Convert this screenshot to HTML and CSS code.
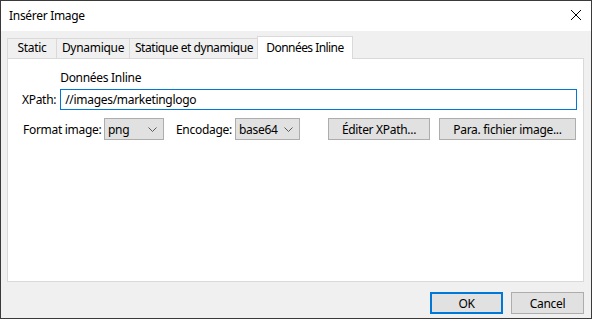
FILE: index.html
```html
<!DOCTYPE html>
<html lang="fr">
<head>
    <meta charset="UTF-8">
    <meta name="viewport" content="width=device-width, initial-scale=1.0">
    <title>Insérer Image</title>
    <link rel="stylesheet" href="styles.css">
</head>
<body>
    <div class="dialog">
        <div class="titlebar">
            <span class="title">Insérer Image</span>
            <svg class="close" width="12" height="12" viewBox="0 0 12 12">
                <path d="M1 1 L11 11 M11 1 L1 11" stroke="#000" stroke-width="1" fill="none"/>
            </svg>
        </div>
        <div class="content">
            <div class="tabs">
                <div class="tab tab-static">Static</div>
                <div class="tab tab-dyn">Dynamique</div>
                <div class="tab tab-both">Statique et dynamique</div>
                <div class="tab tab-inline active">Données Inline</div>
            </div>
            <div class="panel">
                <div class="field-grid">
                    <span></span>
                    <span class="heading">Données Inline</span>
                    <label for="xpath">XPath:</label>
                    <input type="text" id="xpath" value="//images/marketinglogo">
                </div>
                <div class="options">
                    <span class="opt-label">Format image:</span>
                    <div class="combo combo-format">
                        <span>png</span>
                        <svg width="9" height="5" viewBox="0 0 9 5"><path d="M0.5 0.5 L4.5 4.5 L8.5 0.5" stroke="#5a5a5a" fill="none"/></svg>
                    </div>
                    <span class="opt-label encodage">Encodage:</span>
                    <div class="combo combo-enc">
                        <span>base64</span>
                        <svg width="9" height="5" viewBox="0 0 9 5"><path d="M0.5 0.5 L4.5 4.5 L8.5 0.5" stroke="#5a5a5a" fill="none"/></svg>
                    </div>
                    <button class="btn btn-xpath">Éditer XPath...</button>
                    <button class="btn btn-file">Para. fichier image...</button>
                </div>
            </div>
            <div class="footer">
                <button class="btn btn-ok">OK</button>
                <button class="btn">Cancel</button>
            </div>
        </div>
    </div>
</body>
</html>
```

FILE: styles.css
```css
body {
    margin: 0;
    font-family: "Noto Sans", "Open Sans", sans-serif;
    font-size: 12px;
    letter-spacing: -0.3px;
    color: #000;
    background: #fff;
}
.dialog {
    width: 590px;
    height: 317px;
    border: 1px solid #3a3a3a;
    display: flex;
    flex-direction: column;
}
.titlebar {
    flex-shrink: 0;
    height: 30px;
    background: #fff;
    display: flex;
    align-items: center;
    justify-content: space-between;
    padding: 0 9px 0 8px;
}
.title {
    margin-top: -2px;
}
.close {
    margin-top: -2px;
}
.content {
    flex: 1;
    background: #f0f0f0;
    padding: 5px 7px 4px 6px;
    display: flex;
    flex-direction: column;
}
.tabs {
    flex-shrink: 0;
    display: flex;
    align-items: flex-end;
    height: 22px;
}
.tab {
    box-sizing: border-box;
    height: 20px;
    line-height: 18px;
    text-align: center;
    border: 1px solid #d9d9d9;
    border-bottom: none;
    margin-right: -1px;
    background: #f0f0f0;
    white-space: nowrap;
}
.tab-static {
    width: 50px;
}
.tab-dyn {
    width: 74px;
}
.tab-both {
    width: 130px;
    letter-spacing: -0.45px;
}
.tab.active {
    width: 96px;
    height: 23px;
    line-height: 21px;
    background: #fff;
    margin: 0 -2px -1px -1px;
    letter-spacing: -0.55px;
    position: relative;
    z-index: 1;
}
.panel {
    flex-shrink: 0;
    box-sizing: border-box;
    height: 224px;
    background: #fff;
    border: 1px solid #d9d9d9;
    padding: 11px 6px 0 14px;
}
.field-grid {
    display: grid;
    grid-template-columns: auto 1fr;
    column-gap: 4px;
    row-gap: 3px;
    align-items: center;
}
.heading {
    line-height: 16px;
}
.field-grid label {
    line-height: 16px;
}
.field-grid input {
    box-sizing: border-box;
    height: 21px;
    border: 1px solid #0078d7;
    padding: 0 4px;
    font: inherit;
    letter-spacing: inherit;
    outline: none;
}
.options {
    display: flex;
    align-items: center;
    margin-top: 8px;
    padding-left: 1px;
    white-space: nowrap;
}
.opt-label {
    flex-shrink: 0;
    width: 81px;
}
.encodage {
    width: 59px;
    margin-left: 12px;
}
.combo {
    flex-shrink: 0;
    box-sizing: border-box;
    height: 22px;
    background: #e1e1e1;
    border: 1px solid #adadad;
    display: flex;
    align-items: center;
    justify-content: space-between;
    padding: 0 6px 0 3px;
}
.combo-format {
    width: 60px;
}
.combo-enc {
    width: 65px;
}
.btn {
    flex-shrink: 0;
    box-sizing: border-box;
    height: 22px;
    background: #e1e1e1;
    border: 1px solid #adadad;
    font: inherit;
    letter-spacing: inherit;
    color: #000;
    padding: 0;
}
.btn-xpath {
    width: 102px;
    margin-left: 28px;
}
.btn-file {
    width: 137px;
    margin-left: 9px;
}
.footer {
    flex-shrink: 0;
    margin-top: 10px;
    display: flex;
    justify-content: flex-end;
    gap: 8px;
}
.footer .btn {
    width: 73px;
}
.btn-ok {
    border: 2px solid #0078d7;
}
```
